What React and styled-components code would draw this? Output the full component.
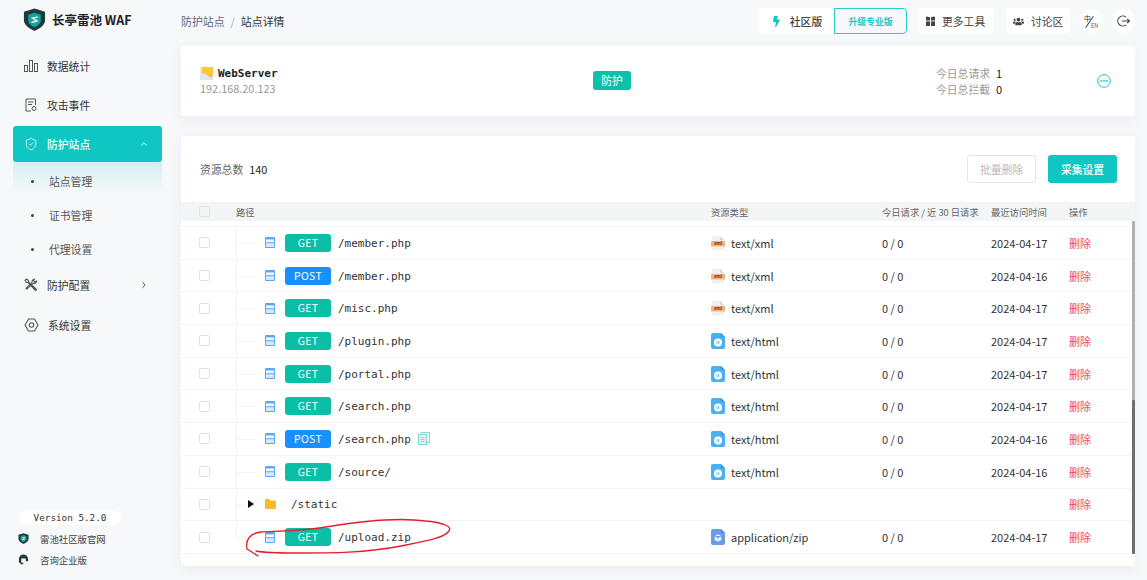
import React from 'react'
import styled, { createGlobalStyle } from 'styled-components'
import { ChevronUp, ChevronRight, ShieldCheck } from 'lucide-react'
import { FaBolt, FaUsers } from 'react-icons/fa'

const CJK = `"Noto Sans CJK SC", "Noto Sans", sans-serif`
const MONO = `"DejaVu Sans Mono", "Noto Sans CJK SC", monospace`
const TEAL = '#0fc6c2'

const Global = createGlobalStyle`
  html, body { margin: 0; padding: 0; height: 100%; overflow: hidden; }
  body { background: #f6f8fa; font-family: ${CJK}; font-size: 11px; color: #333; }
  #root { height: 100%; }
  * { box-sizing: border-box; }
`

const rows = [
  { method: 'GET', path: '/member.php', kind: 'xml', type: 'text/xml', date: '2024-04-17' },
  { method: 'POST', path: '/member.php', kind: 'xml', type: 'text/xml', date: '2024-04-16' },
  { method: 'GET', path: '/misc.php', kind: 'xml', type: 'text/xml', date: '2024-04-17' },
  { method: 'GET', path: '/plugin.php', kind: 'html', type: 'text/html', date: '2024-04-17' },
  { method: 'GET', path: '/portal.php', kind: 'html', type: 'text/html', date: '2024-04-17' },
  { method: 'GET', path: '/search.php', kind: 'html', type: 'text/html', date: '2024-04-17' },
  { method: 'POST', path: '/search.php', kind: 'html', type: 'text/html', date: '2024-04-16', copy: true },
  { method: 'GET', path: '/source/', kind: 'html', type: 'text/html', date: '2024-04-16' },
  { folder: true, path: '/static' },
  { method: 'GET', path: '/upload.zip', kind: 'zip', type: 'application/zip', date: '2024-04-17', last: true },
]

function Logo({ size = 23 }) {
  return (
    <svg width={size} height={size} viewBox="0 0 24 24">
      <path d="M12 0.5 L23 4 V13 C23 18 17 21.5 12 24 C7 21.5 1 18 1 13 V4 Z" fill="#1f3a3c" />
      <path d="M12 5 L18.5 7 V13 C18.5 16 15.5 18.5 12 20 C8.5 18.5 5.5 16 5.5 13 V7 Z" fill="#12a5a0" />
      <path d="M15 9.5 L10 10.5 L14.5 13.5 L9.5 15" fill="none" stroke="#fff" strokeWidth="1.5" strokeLinecap="round" />
    </svg>
  )
}

function PageIcon() {
  return (
    <svg width="10" height="11" viewBox="0 0 10 11">
      <rect x="0" y="0" width="10" height="11" rx="1" fill="#5aa9f8" />
      <rect x="1" y="2.4" width="8" height="2.8" fill="#f1f7ff" />
      <rect x="1" y="6.2" width="8" height="3.8" fill="#d5e8fd" />
    </svg>
  )
}

function FileIcon({ kind }) {
  if (kind === 'xml') {
    return (
      <svg width="14" height="14" viewBox="0 0 14 14">
        <path d="M1 0 H9 L13 4 V13 Q13 14 12 14 H2 Q1 14 1 13 Z" fill="#eff0f3" />
        <path d="M9 0 L13 4 H9 Z" fill="#d8dae0" />
        <rect x="0" y="5" width="14" height="5.5" fill="#fab17c" />
        <text x="7" y="9.4" fontSize="4.6" fontWeight="700" textAnchor="middle" fill="#5a2a10" fontFamily="Liberation Sans">xml</text>
      </svg>
    )
  }
  const fill = kind === 'zip' ? '#6b9be4' : '#49b1f3'
  return (
    <svg width="14" height="16" viewBox="0 0 14 16">
      <path d="M2 0 H10 L14 4 V14 Q14 16 12 16 H2 Q0 16 0 14 V2 Q0 0 2 0 Z" fill={fill} />
      <path d="M10 0 L14 4 H10 Z" fill="#2f86c8" opacity="0.6" />
      {kind === 'zip' ? (
        <path d="M7 5 L10.5 7 V11 L7 13 L3.5 11 V7 Z M3.5 7 L7 9 L10.5 7 M7 9 V13" fill="#fff" stroke={fill} strokeWidth="0.6" />
      ) : (
        <>
          <circle cx="7" cy="9.5" r="4" fill="#fff" />
          <circle cx="7" cy="9.5" r="1.9" fill="#a9dcfa" />
        </>
      )}
    </svg>
  )
}

function DocIcon() {
  return (
    <svg width="12" height="13" viewBox="0 0 12 13" fill="none" stroke="#7fd6cf" strokeWidth="1">
      <rect x="0.5" y="2.5" width="8" height="10" fill="#e6f7f5" />
      <path d="M3 2.5 V0.5 H11.5 V10.5 H8.5 M2.5 5.5 H6.5 M2.5 7.5 H6.5 M2.5 9.5 H6.5" />
    </svg>
  )
}

function StatsIcon() {
  return (
    <svg width="14" height="14" viewBox="0 0 14 14" fill="none" stroke="#555" strokeWidth="1">
      <rect x="0.5" y="6.5" width="3" height="6" />
      <rect x="5.5" y="1.5" width="3" height="11" />
      <rect x="10.5" y="4.5" width="3" height="8" />
    </svg>
  )
}

function EventsIcon() {
  return (
    <svg width="14" height="14" viewBox="0 0 14 14" fill="none" stroke="#555" strokeWidth="1">
      <path d="M11.5 7 V1 H2 V13 H7 M4 4 H9.5 M4 6.5 H8" />
      <circle cx="10" cy="10.5" r="2" />
    </svg>
  )
}

function ToolsIcon() {
  return (
    <svg width="14" height="14" viewBox="0 0 14 14" fill="none" stroke="#555" strokeWidth="1.1" strokeLinejoin="round">
      <path d="M1 2.5 L2.5 1 L4.5 2.5 V4 L12.5 11.5 L11.5 12.5 L4 4.5 H2.5 Z" />
      <path d="M12.8 3 A3 3 0 0 1 9 5.4 L2.8 11.2 L1.9 10.3 L8 4.4 A3 3 0 0 1 10.6 1 L9.4 2.7 L10.8 4.1 Z" />
    </svg>
  )
}

function SettingsIcon() {
  return (
    <svg width="15" height="14" viewBox="0 0 15 14" fill="none" stroke="#555" strokeWidth="1.1" strokeLinejoin="round">
      <path d="M4.5 1 H10.5 L14 7 L10.5 13 H4.5 L1 7 Z" />
      <circle cx="7.5" cy="7" r="2.2" />
    </svg>
  )
}

function ToolboxIcon() {
  return (
    <svg width="9" height="10" viewBox="0 0 9 10" fill="#444">
      <path d="M0 1.5 Q0 0.5 1 0.5 L4 1.2 V4.4 H0 Z" />
      <path d="M9 1.5 Q9 0.5 8 0.5 L5 1.2 V4.4 H9 Z" />
      <rect x="0" y="5.4" width="4" height="4.6" />
      <rect x="5" y="5.4" width="4" height="4.6" />
    </svg>
  )
}

function LogoutIcon() {
  return (
    <svg width="13" height="12" viewBox="0 0 13 12" fill="none" stroke="#444" strokeWidth="1.1">
      <path d="M9 2.2 A5 5 0 1 0 9 9.8" />
      <path d="M5 6 H12.4 M10.2 3.8 L12.4 6 L10.2 8.2" />
    </svg>
  )
}

export default function App() {
  return (
    <Page>
      <Global />
      <Sidebar>
        <Brand>
          <Logo />
          <BrandName>长亭雷池 WAF</BrandName>
        </Brand>
        <Nav>
          <NavItem><StatsIcon />数据统计</NavItem>
          <NavItem><EventsIcon />攻击事件</NavItem>
          <NavItem $active>
            <ShieldCheck size={14} strokeWidth={1.4} />防护站点
            <Caret><ChevronUp size={10} strokeWidth={2} /></Caret>
          </NavItem>
          <SubMenu>
            <SubItem>站点管理</SubItem>
            <SubItem>证书管理</SubItem>
            <SubItem>代理设置</SubItem>
          </SubMenu>
          <NavItem><ToolsIcon />防护配置<Caret><ChevronRight size={10} strokeWidth={2.4} /></Caret></NavItem>
          <NavItem><SettingsIcon />系统设置</NavItem>
        </Nav>
        <SideFoot>
          <Version>Version 5.2.0</Version>
          <FootLink><Logo size={11} />雷池社区版官网</FootLink>
          <FootLink>
            <svg width="11" height="11" viewBox="0 0 12 12">
              <path d="M6 0.5 A5 5 0 0 1 11 5.5 V8 H8.5 V5 H3.5 V9 L6.5 10.5 L4 11.5 L1 9 V5.5 A5 5 0 0 1 6 0.5 Z" fill="#1f3a3c" />
            </svg>
            咨询企业版
          </FootLink>
        </SideFoot>
      </Sidebar>

      <Main>
        <Header>
          <Crumbs>
            <span>防护站点</span><CrumbSep>/</CrumbSep><CrumbNow>站点详情</CrumbNow>
          </Crumbs>
          <Actions>
            <Edition>
              <EditionName><FaBolt size={11} color={TEAL} />社区版</EditionName>
              <Upgrade>升级专业版</Upgrade>
            </Edition>
            <ToolBtn $w={75}><ToolboxIcon />更多工具</ToolBtn>
            <ToolBtn $w={64}><FaUsers size={11} color="#444" />讨论区</ToolBtn>
            <RoundBtn>
              <LangCn>中</LangCn><LangSlash /><LangEn>EN</LangEn>
            </RoundBtn>
            <RoundBtn><LogoutIcon /></RoundBtn>
          </Actions>
        </Header>

        <SiteCard>
          <SiteInfo>
            <SiteName>
              <svg width="13" height="13" viewBox="0 0 13 13">
                <rect width="13" height="13" fill="#dfe6f2" />
                <path d="M2 0 H13 V8 Q12 12 9 9.5 Q6 6.5 2 6 Z" fill="#fcc736" />
              </svg>
              WebServer
            </SiteName>
            <SiteIp>192.168.20.123</SiteIp>
          </SiteInfo>
          <SiteTag>防护</SiteTag>
          <SiteStats>
            <StatLine><StatLabel>今日总请求</StatLabel><StatValue>1</StatValue></StatLine>
            <StatLine><StatLabel>今日总拦截</StatLabel><StatValue>0</StatValue></StatLine>
          </SiteStats>
          <MoreBtn>
            <svg width="14" height="14" viewBox="0 0 14 14">
              <circle cx="7" cy="7" r="6.3" fill="none" stroke={TEAL} strokeWidth="1" />
              <circle cx="4.2" cy="7" r="0.9" fill={TEAL} /><circle cx="7" cy="7" r="0.9" fill={TEAL} /><circle cx="9.8" cy="7" r="0.9" fill={TEAL} />
            </svg>
          </MoreBtn>
        </SiteCard>

        <TableCard>
          <Toolbar>
            <TotalLabel>资源总数</TotalLabel>
            <TotalValue>140</TotalValue>
            <GhostBtn>批量删除</GhostBtn>
            <PrimaryBtn>采集设置</PrimaryBtn>
          </Toolbar>
          <HeadRow>
            <Check $head />
            <span>路径</span>
            <span>资源类型</span>
            <span>今日请求 / 近 30 日请求</span>
            <span>最近访问时间</span>
            <span>操作</span>
          </HeadRow>
          <Rows>
            {rows.map((r, i) => (
              <Row key={i}>
                <Check />
                <PathCell $last={r.last} $folder={r.folder}>
                  {r.folder ? (
                    <>
                      <Arrow />
                      <svg width="11" height="10" viewBox="0 0 11 10">
                        <path d="M0 1 Q0 0 1 0 H4 L5 1.5 H10 Q11 1.5 11 2.5 V9 Q11 10 10 10 H1 Q0 10 0 9 Z" fill="#fbb829" />
                      </svg>
                      <FolderName>{r.path}</FolderName>
                    </>
                  ) : (
                    <>
                      <PageIcon />
                      <Method $post={r.method === 'POST'}>{r.method}</Method>
                      <PathText>{r.path}</PathText>
                      {r.copy && <CopyWrap><DocIcon /></CopyWrap>}
                    </>
                  )}
                </PathCell>
                <TypeCell>
                  {r.kind && <FileIcon kind={r.kind} />}
                  {r.type}
                </TypeCell>
                <span>{r.folder ? '' : '0 / 0'}</span>
                <span>{r.date}</span>
                <DeleteLink>删除</DeleteLink>
              </Row>
            ))}
          </Rows>
          <ScrollTrack><ScrollThumb /></ScrollTrack>
        </TableCard>
      </Main>

      <Scribble width="220" height="50" viewBox="0 0 220 50" fill="none" stroke="#e3202a" strokeWidth="1.3" strokeLinecap="round">
        <path d="M1 31 C6 34 9 36 12 38 M1 31 C-1 22 4 15 15 14 C35 13 55 13 80 9 C115 3 150 -1 180 3 C200 5 206 9 203 13 C198 20 180 23 155 28 C120 35 85 35 50 35 C35 35 20 35 10 33" />
      </Scribble>
    </Page>
  )
}

const Page = styled.div`
  position: relative;
  display: flex;
  height: 580px;
  width: 1147px;
`
const Sidebar = styled.aside`
  width: 181px;
  flex: none;
  display: flex;
  flex-direction: column;
  padding-bottom: 10px;
`
const Brand = styled.div`
  height: 46px;
  display: flex;
  align-items: center;
  gap: 6px;
  padding: 0 0 7px 23px;
  svg { flex: none; }
`
const BrandName = styled.div`
  font-size: 12.5px;
  font-weight: 700;
  color: #222;
  white-space: nowrap;
`
const Nav = styled.nav`
  margin: 2px 19px 0 13px;
  display: flex;
  flex-direction: column;
  gap: 3px;
  > div:last-child { margin-top: 1px; }
`
const NavItem = styled.div`
  height: 36px;
  display: flex;
  align-items: center;
  gap: 9px;
  padding: 0 11px;
  border-radius: 3px;
  font-size: 10.8px;
  color: ${p => (p.$active ? '#fff' : '#333')};
  background: ${p => (p.$active ? TEAL : 'transparent')};
  font-weight: ${p => (p.$active ? 500 : 400)};
  svg { flex: none; color: ${p => (p.$active ? '#fff' : '#555')}; }
`
const Caret = styled.span`
  margin-left: auto;
  display: flex;
  padding-right: 2px;
`
const SubMenu = styled.div`
  margin: -3px 0 -2px;
  padding-top: 2px;
  background: linear-gradient(180deg, rgba(15, 198, 194, 0.15), rgba(15, 198, 194, 0) 30px);
  background-repeat: no-repeat;
  background-size: 100% 30px;
`
const SubItem = styled.div`
  height: 34px;
  display: flex;
  align-items: center;
  padding-left: 36px;
  font-size: 10.8px;
  color: #555;
  position: relative;
  &::before {
    content: '';
    position: absolute;
    left: 18px;
    top: 16px;
    width: 3px;
    height: 3px;
    border-radius: 50%;
    background: #444;
  }
`
const SideFoot = styled.div`
  margin-top: auto;
  padding-left: 19px;
`
const Version = styled.div`
  width: 102px;
  height: 15px;
  border-radius: 8px;
  background: #fff;
  font-family: ${MONO};
  font-size: 9.3px;
  line-height: 15px;
  text-align: center;
  color: #333;
  margin-bottom: 3px;
`
const FootLink = styled.div`
  height: 21px;
  display: flex;
  align-items: center;
  gap: 11px;
  font-size: 9.4px;
  color: #444;
  margin-left: -1px;
`
const Main = styled.main`
  flex: 1;
  min-width: 0;
  display: flex;
  flex-direction: column;
  padding: 0 12px 14px 0;
`
const Header = styled.header`
  height: 46px;
  flex: none;
  display: flex;
  align-items: flex-start;
  justify-content: space-between;
`
const Crumbs = styled.div`
  display: flex;
  align-items: center;
  height: 42px;
  font-size: 10.9px;
  color: #667;
`
const CrumbSep = styled.span`
  margin: 0 6px;
  color: #aaa;
`
const CrumbNow = styled.span`
  color: #333;
`
const Actions = styled.div`
  display: flex;
  align-items: center;
  margin-top: 8px;
  gap: 12px;
`
const Edition = styled.div`
  display: flex;
  height: 26px;
`
const EditionName = styled.div`
  width: 75px;
  background: #fff;
  border-radius: 4px 0 0 4px;
  display: flex;
  align-items: center;
  justify-content: center;
  gap: 8px;
  font-size: 10.8px;
  font-weight: 500;
  color: #444;
`
const Upgrade = styled.div`
  width: 73px;
  border: 1px solid #25d0cc;
  border-radius: 0 4px 4px 0;
  display: flex;
  align-items: center;
  justify-content: center;
  font-size: 8.8px;
  font-weight: 700;
  color: #1cc9c5;
`
const ToolBtn = styled.div`
  width: ${p => p.$w}px;
  height: 26px;
  padding-left: 7px;
  background: #fff;
  border-radius: 4px;
  display: flex;
  align-items: center;
  gap: 7px;
  font-size: 10.8px;
  color: #444;
  svg { flex: none; }
`
const RoundBtn = styled.div`
  position: relative;
  width: 23.5px;
  height: 24px;
  border-radius: 50%;
  background: #fff;
  display: flex;
  align-items: center;
  justify-content: center;
  margin-left: -3px;
`
const LangCn = styled.span`
  position: absolute;
  left: 5px;
  top: 5px;
  font-size: 7px;
  line-height: 8px;
  color: #333;
`
const LangSlash = styled.span`
  position: absolute;
  left: 10px;
  top: 6px;
  width: 1px;
  height: 14px;
  background: #444;
  transform: rotate(34deg);
`
const LangEn = styled.span`
  position: absolute;
  left: 12px;
  top: 14px;
  font-size: 5.5px;
  line-height: 6px;
  color: #555;
`
const Card = styled.section`
  background: #fff;
  border-radius: 3px;
  box-shadow: 0 4px 12px rgba(120, 130, 150, 0.08);
`
const SiteCard = styled(Card)`
  height: 70px;
  flex: none;
  display: flex;
  align-items: center;
  padding: 0 24px 0 19px;
`
const SiteInfo = styled.div`
  width: 393px;
  flex: none;
  margin-top: -1px;
`
const SiteName = styled.div`
  display: flex;
  align-items: center;
  gap: 5px;
  font-family: ${MONO};
  font-size: 11px;
  font-weight: 700;
  line-height: 15px;
  color: #222;
`
const SiteIp = styled.div`
  font-size: 10.9px;
  line-height: 14px;
  color: #999;
`
const SiteTag = styled.div`
  width: 38px;
  height: 19px;
  margin-top: -1px;
  border-radius: 3px;
  background: #0cc0ac;
  color: #fff;
  font-size: 10.8px;
  line-height: 19px;
  text-align: center;
`
const SiteStats = styled.div`
  margin-left: auto;
  width: 161px;
`
const StatLine = styled.div`
  display: flex;
  gap: 6px;
  height: 16px;
  line-height: 16px;
`
const StatLabel = styled.span`
  color: #999;
  font-size: 10.8px;
`
const StatValue = styled.span`
  color: #222;
  font-size: 11px;
`
const MoreBtn = styled.div`
  display: flex;
`
const TableCard = styled(Card)`
  position: relative;
  margin-top: 20px;
  flex: 1;
  min-height: 0;
  display: flex;
  flex-direction: column;
`
const Toolbar = styled.div`
  height: 66px;
  flex: none;
  display: flex;
  align-items: center;
  padding: 0 18px 0 19px;
`
const TotalLabel = styled.span`
  font-size: 10.8px;
  color: #666;
`
const TotalValue = styled.span`
  margin-left: 6px;
  font-size: 10.8px;
  color: #222;
  margin-right: auto;
`
const GhostBtn = styled.div`
  width: 69px;
  height: 28px;
  border: 1px solid #e5e5e5;
  border-radius: 3px;
  font-size: 10.8px;
  line-height: 26px;
  text-align: center;
  color: #bbb;
`
const PrimaryBtn = styled.div`
  width: 69px;
  height: 28px;
  margin-left: 12px;
  border-radius: 3px;
  background: ${TEAL};
  font-size: 10.8px;
  line-height: 28px;
  text-align: center;
  color: #fff;
  font-weight: 500;
`
const columns = '55px 475px 171px 109px 78px 1fr'
const HeadRow = styled.div`
  height: 19px;
  flex: none;
  display: grid;
  grid-template-columns: ${columns};
  align-items: center;
  background: #f4f5f7;
  font-size: 9.3px;
  color: #666;
  white-space: nowrap;
`
const Rows = styled.div`
  margin-top: 5px;
  border-top: 1px solid #f3f3f3;
`
const Row = styled.div`
  height: 32.7px;
  display: grid;
  grid-template-columns: ${columns};
  align-items: center;
  border-bottom: 1px solid #f3f3f3;
  font-size: 11px;
  color: #333;
`
const Check = styled.span`
  width: 11px;
  height: 11px;
  margin-left: 18px;
  border: 1px solid #e2e2e2;
  border-radius: 2px;
  background: ${p => (p.$head ? '#f4f5f7' : '#fff')};
`
const PathCell = styled.div`
  position: relative;
  height: 100%;
  display: flex;
  align-items: center;
  padding-left: 29px;
  &::before {
    content: '';
    position: absolute;
    left: 0;
    top: 0;
    bottom: ${p => (p.$last ? '50%' : '-1px')};
    border-left: 1px solid #f3f3f3;
  }
  &::after {
    content: '';
    position: absolute;
    left: 0;
    top: 50%;
    width: ${p => (p.$folder ? '7px' : '20px')};
    border-top: 1px solid #f3f3f3;
  }
`
const Method = styled.span`
  width: 46px;
  height: 18px;
  margin: 0 7px 0 10px;
  border-radius: 3px;
  background: ${p => (p.$post ? '#1890ff' : '#0abfa5')};
  color: #fff;
  font-size: 10.5px;
  line-height: 18px;
  text-align: center;
  letter-spacing: 0.3px;
`
const PathText = styled.span`
  font-family: ${MONO};
  font-size: 11px;
  color: #333;
  padding-top: 1px;
`
const CopyWrap = styled.span`
  display: flex;
  margin-left: 7px;
`
const Arrow = styled.span`
  position: absolute;
  left: 12px;
  top: 50%;
  margin-top: -4px;
  border-left: 6px solid #111;
  border-top: 4px solid transparent;
  border-bottom: 4px solid transparent;
`
const FolderName = styled(PathText)`
  margin-left: 15px;
`
const TypeCell = styled.div`
  display: flex;
  align-items: center;
  gap: 6px;
  svg { flex: none; }
`
const DeleteLink = styled.span`
  color: #f6456a;
`
const ScrollTrack = styled.div`
  position: absolute;
  right: 0;
  top: 85px;
  width: 3.5px;
  height: 333px;
  background: #b2b2b2;
  border-radius: 1px;
`
const ScrollThumb = styled.div`
  position: absolute;
  left: 0;
  right: 0;
  top: 179px;
  bottom: 0;
  background: #6e6e6e;
  border-radius: 1px;
`
const Scribble = styled.svg`
  position: absolute;
  left: 246px;
  top: 518px;
  overflow: visible;
  pointer-events: none;
`
